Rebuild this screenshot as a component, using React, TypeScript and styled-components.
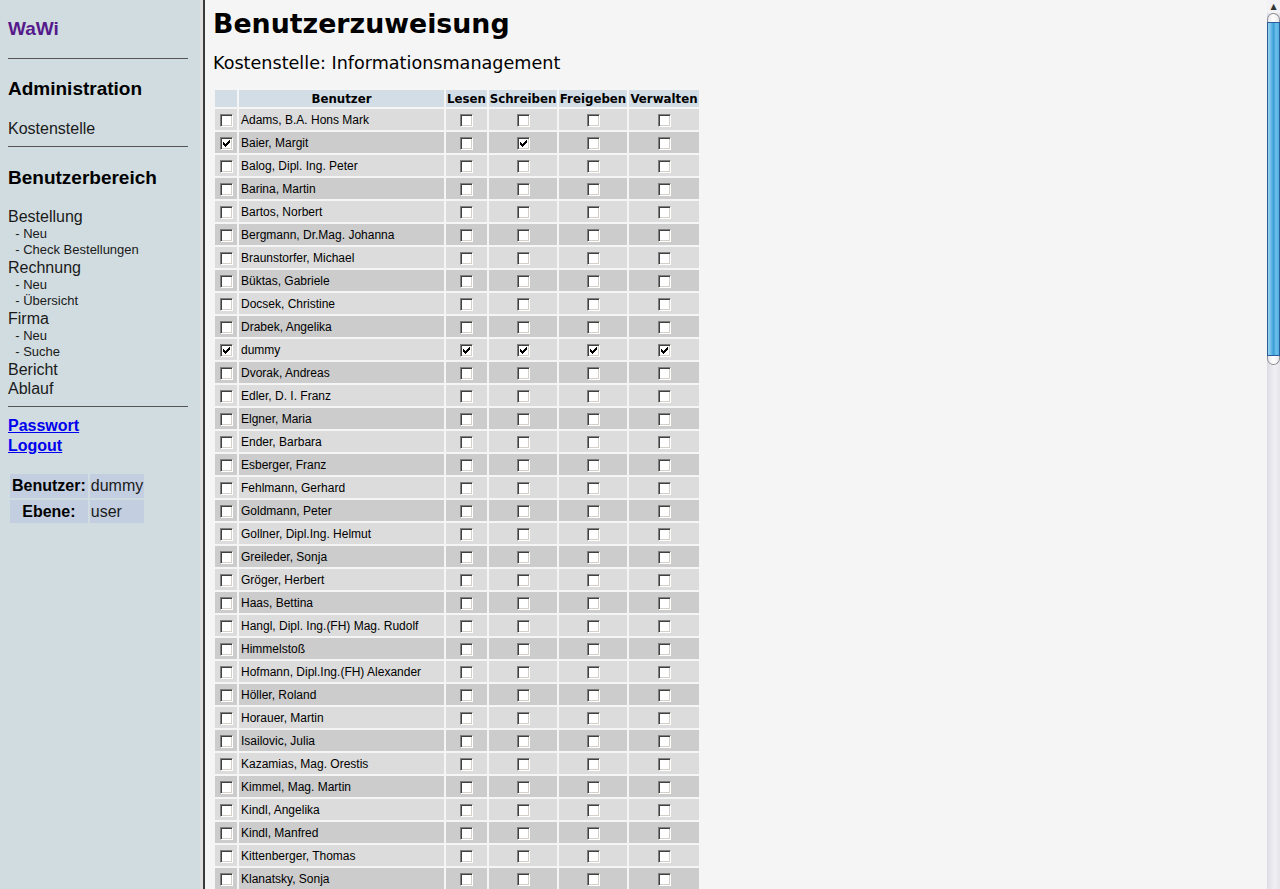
import React from 'react';
import styled, { createGlobalStyle } from 'styled-components';

type Perm = [boolean, boolean, boolean, boolean, boolean];

type UserRow = {
  name: string;
  perms?: Perm;
};

const users: UserRow[] = [
  { name: 'Adams, B.A. Hons Mark' },
  { name: 'Baier, Margit', perms: [true, false, true, false, false] },
  { name: 'Balog, Dipl. Ing. Peter' },
  { name: 'Barina, Martin' },
  { name: 'Bartos, Norbert' },
  { name: 'Bergmann, Dr.Mag. Johanna' },
  { name: 'Braunstorfer, Michael' },
  { name: 'Büktas, Gabriele' },
  { name: 'Docsek, Christine' },
  { name: 'Drabek, Angelika' },
  { name: 'dummy', perms: [true, true, true, true, true] },
  { name: 'Dvorak, Andreas' },
  { name: 'Edler, D. I. Franz' },
  { name: 'Elgner, Maria' },
  { name: 'Ender, Barbara' },
  { name: 'Esberger, Franz' },
  { name: 'Fehlmann, Gerhard' },
  { name: 'Goldmann, Peter' },
  { name: 'Gollner, Dipl.Ing. Helmut' },
  { name: 'Greileder, Sonja' },
  { name: 'Gröger, Herbert' },
  { name: 'Haas, Bettina' },
  { name: 'Hangl, Dipl. Ing.(FH) Mag. Rudolf' },
  { name: 'Himmelstoß' },
  { name: 'Hofmann, Dipl.Ing.(FH) Alexander' },
  { name: 'Höller, Roland' },
  { name: 'Horauer, Martin' },
  { name: 'Isailovic, Julia' },
  { name: 'Kazamias, Mag. Orestis' },
  { name: 'Kimmel, Mag. Martin' },
  { name: 'Kindl, Angelika' },
  { name: 'Kindl, Manfred' },
  { name: 'Kittenberger, Thomas' },
  { name: 'Klanatsky, Sonja' },
];

const GlobalStyle = createGlobalStyle`
  html, body {
    margin: 0;
    padding: 0;
    height: 100%;
    overflow: hidden;
  }
  body {
    font-family: "Liberation Sans", Arial, sans-serif;
  }
`;

const Frameset = styled.div`
  display: flex;
  height: 100vh;
`;

const Sidebar = styled.nav`
  flex: 0 0 203px;
  box-sizing: border-box;
  padding: 0 12px 0 8px;
  background: #d1dce0;
  border-right: 3px solid #dedede;
  display: flex;
  flex-direction: column;
  align-items: stretch;
  color: #000;
`;

const Logo = styled.a`
  margin-top: 18px;
  font-size: 19px;
  line-height: 22px;
  font-weight: bold;
  color: #551a8b;
  text-decoration: none;
`;

const Rule = styled.div<{ $top: number }>`
  height: 1px;
  background: #555;
  margin-top: ${(p) => p.$top}px;
`;

const SectionTitle = styled.h3<{ $top: number }>`
  margin: ${(p) => p.$top}px 0 0;
  font-size: 19px;
  line-height: 22px;
  font-weight: bold;
`;

const NavItem = styled.a<{ $top?: number }>`
  display: block;
  margin-top: ${(p) => p.$top ?? 0}px;
  font-size: 16px;
  line-height: 19px;
  color: #1a1a1a;
  text-decoration: none;
`;

const SubItem = styled.a`
  display: block;
  font-size: 13px;
  line-height: 16px;
  color: #1a1a1a;
  text-decoration: none;
  white-space: pre;
`;

const NavGroup = styled.div`
  margin-top: 18px;
  display: flex;
  flex-direction: column;
`;

const Links = styled.div`
  margin-top: 9px;
  display: flex;
  flex-direction: column;
  align-items: flex-start;
`;

const BoldLink = styled.a`
  font-size: 16px;
  line-height: 20px;
  font-weight: bold;
  color: #0000ee;
  text-decoration: underline;
`;

const InfoTable = styled.table`
  align-self: flex-start;
  margin-top: 16px;
  border-spacing: 2px;
  font-size: 16px;
`;

const InfoLabel = styled.th`
  background: #c3cfe1;
  padding: 0 2px;
  text-align: center;
  font-weight: bold;
`;

const InfoValue = styled.td<{ $h: number }>`
  background: #c3cfe1;
  height: ${(p) => p.$h}px;
  padding: 0 1px;
  color: #1a1a1a;
`;

const Main = styled.main`
  flex: 1;
  background: #f5f5f5;
  border-left: 2px solid #3a3a3a;
  overflow: hidden;
  padding: 8px;
`;

const ScrollBar = styled.div`
  flex: 0 0 13px;
  display: flex;
  flex-direction: column;
  background: linear-gradient(to right, #dcdce4, #f0f0f4 60%, #e4e4ea);
`;

const ArrowButton = styled.div`
  flex: 0 0 13px;
  display: flex;
  align-items: center;
  justify-content: center;
  background: #f2f2f4;
  font-size: 8px;
  color: #333;
  font-family: "DejaVu Sans", sans-serif;
`;

const Thumb = styled.div`
  flex: 0 0 352px;
  display: flex;
  flex-direction: column;
`;

const ThumbCap = styled.div<{ $end: 'top' | 'bottom' }>`
  flex: 0 0 9px;
  box-sizing: border-box;
  background: linear-gradient(to right, #e8e8ec, #ffffff 50%, #e8e8ec);
  border: 1px solid #8c8c94;
  ${(p) =>
    p.$end === 'top'
      ? 'border-radius: 7px 7px 0 0; border-bottom: 0;'
      : 'border-radius: 0 0 7px 7px; border-top: 0;'}
`;

const ThumbBody = styled.div`
  flex: 1;
  box-sizing: border-box;
  border: 1px solid #2b5c9c;
  background: linear-gradient(
    to right,
    #9ad4ee 0%,
    #6fc0e8 25%,
    #3d9fda 50%,
    #6fc0e8 75%,
    #4ab0e2 100%
  );
`;

const Title = styled.h1`
  margin: 0;
  font-family: "DejaVu Sans", Verdana, sans-serif;
  font-size: 26.8px;
  line-height: 31px;
  font-weight: bold;
  color: #000;
`;

const Subtitle = styled.h3`
  margin: 14px 0 0;
  font-family: "DejaVu Sans", Verdana, sans-serif;
  font-size: 17.6px;
  line-height: 20px;
  font-weight: normal;
  color: #000;
`;

const Grid = styled.table`
  margin-top: 15px;
  border-spacing: 2px;
  table-layout: fixed;
  width: 488px;
`;

const HeadCell = styled.th<{ $w: number }>`
  width: ${(p) => p.$w}px;
  box-sizing: border-box;
  height: 17px;
  padding: 0;
  background: #d3dde5;
  font-family: "DejaVu Sans", Verdana, sans-serif;
  font-size: 11.8px;
  font-weight: bold;
  text-align: center;
  color: #000;
  white-space: nowrap;
  overflow: visible;
`;

const Row = styled.tr<{ $alt: boolean }>`
  background: ${(p) => (p.$alt ? '#cccccc' : '#dcdcdc')};
`;

const BoxCell = styled.td`
  height: 21px;
  padding: 0;
  text-align: center;
  vertical-align: middle;
`;

const NameCell = styled.td`
  height: 21px;
  padding: 0 2px;
  font-family: "Liberation Sans", Arial, sans-serif;
  font-size: 12px;
  color: #000;
  white-space: nowrap;
`;

const Box = styled.span`
  display: inline-block;
  position: relative;
  width: 13px;
  height: 13px;
  box-sizing: border-box;
  vertical-align: middle;
  background: #fff;
  border: 1px solid;
  border-color: #808080 #fff #fff #808080;
  box-shadow: inset 1px 1px 0 #404040, inset -1px -1px 0 #d4d0c8;

  svg {
    position: absolute;
    left: 2px;
    top: 2px;
  }
`;

function Check({ on }: { on: boolean }) {
  return (
    <Box>
      {on && (
        <svg width="7" height="7" viewBox="0 0 7 7">
          <path d="M0 2h1v1h1v1h1V3h1V2h1V1h1V0h1v3H6v1H5v1H4v1H3v1H2V6H1V5H0z" fill="#000" />
        </svg>
      )}
    </Box>
  );
}

const columns: { label: string; w: number }[] = [
  { label: '', w: 22 },
  { label: 'Benutzer', w: 205 },
  { label: 'Lesen', w: 41 },
  { label: 'Schreiben', w: 68 },
  { label: 'Freigeben', w: 68 },
  { label: 'Verwalten', w: 70 },
];

export default function App() {
  return (
    <>
      <GlobalStyle />
      <Frameset>
        <Sidebar>
          <Logo href="#">WaWi</Logo>
          <Rule $top={18} />
          <SectionTitle $top={19}>Administration</SectionTitle>
          <NavItem $top={19}>Kostenstelle</NavItem>
          <Rule $top={8} />
          <SectionTitle $top={20}>Benutzerbereich</SectionTitle>
          <NavGroup>
            <NavItem>Bestellung</NavItem>
            <SubItem>{'  - Neu'}</SubItem>
            <SubItem>{'  - Check Bestellungen'}</SubItem>
            <NavItem>Rechnung</NavItem>
            <SubItem>{'  - Neu'}</SubItem>
            <SubItem>{'  - Übersicht'}</SubItem>
            <NavItem>Firma</NavItem>
            <SubItem>{'  - Neu'}</SubItem>
            <SubItem>{'  - Suche'}</SubItem>
            <NavItem>Bericht</NavItem>
            <NavItem>Ablauf</NavItem>
          </NavGroup>
          <Rule $top={8} />
          <Links>
            <BoldLink href="#">Passwort</BoldLink>
            <BoldLink href="#">Logout</BoldLink>
          </Links>
          <InfoTable>
            <tbody>
              <tr>
                <InfoLabel>Benutzer:</InfoLabel>
                <InfoValue $h={24}>dummy</InfoValue>
              </tr>
              <tr>
                <InfoLabel>Ebene:</InfoLabel>
                <InfoValue $h={23}>user</InfoValue>
              </tr>
            </tbody>
          </InfoTable>
        </Sidebar>
        <Main>
          <Title>Benutzerzuweisung</Title>
          <Subtitle>Kostenstelle: Informationsmanagement</Subtitle>
          <Grid>
            <thead>
              <tr>
                {columns.map((c, i) => (
                  <HeadCell key={i} $w={c.w}>
                    {c.label}
                  </HeadCell>
                ))}
              </tr>
            </thead>
            <tbody>
              {users.map((u, i) => {
                const p = u.perms ?? [false, false, false, false, false];
                return (
                  <Row key={u.name} $alt={i % 2 === 1}>
                    <BoxCell>
                      <Check on={p[0]} />
                    </BoxCell>
                    <NameCell>{u.name}</NameCell>
                    {p.slice(1).map((v, j) => (
                      <BoxCell key={j}>
                        <Check on={v} />
                      </BoxCell>
                    ))}
                  </Row>
                );
              })}
            </tbody>
          </Grid>
        </Main>
        <ScrollBar>
          <ArrowButton>▲</ArrowButton>
          <Thumb>
            <ThumbCap $end="top" />
            <ThumbBody />
            <ThumbCap $end="bottom" />
          </Thumb>
        </ScrollBar>
      </Frameset>
    </>
  );
}
